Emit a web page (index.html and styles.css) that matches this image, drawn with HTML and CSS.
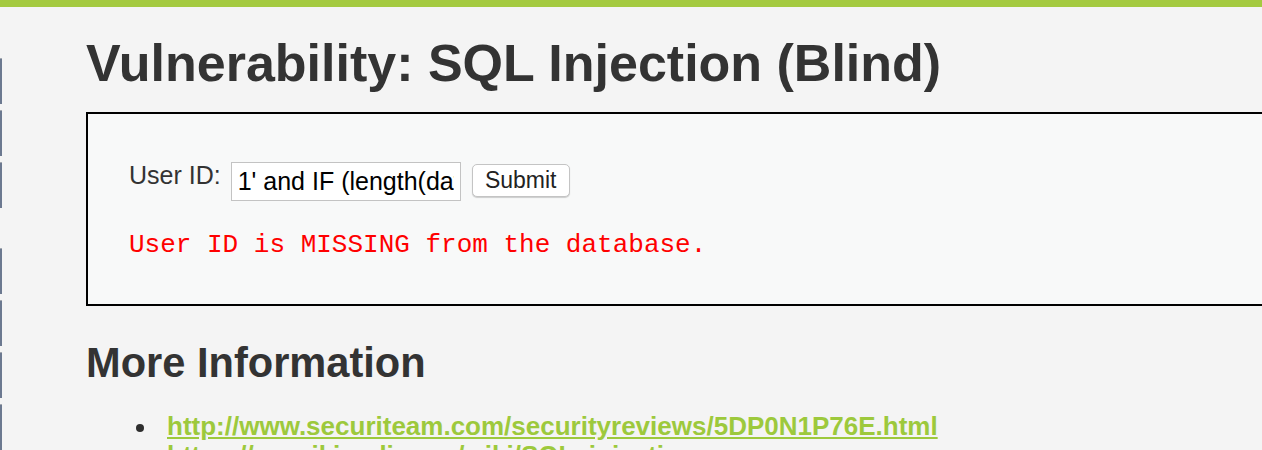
FILE: index.html
```html
<!DOCTYPE html>
<html>
<head>
<meta charset="utf-8">
<title>Vulnerability: SQL Injection (Blind)</title>
<link rel="stylesheet" href="styles.css">
</head>
<body>
<div class="topbar"></div>
<div class="page">
  <nav class="sidebar">
    <div class="group">
      <div class="item"></div>
      <div class="item"></div>
      <div class="item"></div>
    </div>
    <div class="group">
      <div class="item"></div>
      <div class="item"></div>
      <div class="item"></div>
      <div class="item"></div>
    </div>
  </nav>
  <main class="main">
    <h1 class="title">Vulnerability: SQL Injection (Blind)</h1>
    <div class="code-area">
      <form class="form-row">
        <label class="label" for="uid">User ID:</label>
        <input class="text-input" id="uid" type="text" value="1' and IF (length(database())=4,sleep(5),1) #">
        <button class="submit" type="button">Submit</button>
      </form>
      <pre class="error">User ID is MISSING from the database.</pre>
    </div>
    <h2 class="subtitle">More Information</h2>
    <ul class="links">
      <li><a href="#">http://www.securiteam.com/securityreviews/5DP0N1P76E.html</a></li>
      <li><a href="#">https://en.wikipedia.org/wiki/SQL_injection</a></li>
      <li><a href="#">http://www.unixwiz.net/techtips/sql-injection.html</a></li>
    </ul>
  </main>
</div>
</body>
</html>
```
FILE: styles.css
```css
html, body {
  margin: 0;
  padding: 0;
}
body {
  background: #f4f4f4;
  font-family: "Liberation Sans", Arial, sans-serif;
  color: #333;
  overflow: hidden;
  width: 1262px;
  height: 450px;
}
.topbar {
  height: 7px;
  background: #a4ca40;
}
.page {
  display: flex;
  align-items: flex-start;
}
.sidebar {
  width: 2px;
  flex: none;
  padding-top: 51px;
  display: flex;
  flex-direction: column;
  gap: 40px;
}
.group {
  display: flex;
  flex-direction: column;
  gap: 6px;
}
.item {
  height: 46px;
  background: #6c7990;
  border-top: 1px solid #a3a8b0;
  box-sizing: border-box;
}
.main {
  margin-left: 84px;
  width: 1300px;
  flex: none;
}
.title {
  margin: 26px 0 0;
  font-size: 52px;
  line-height: 60px;
  font-weight: bold;
  color: #333;
}
.code-area {
  margin-top: 19px;
  border: 2px solid #000;
  background: #f8f9f9;
  padding: 47px 0 44px 41px;
}
.form-row {
  display: flex;
  align-items: flex-start;
  margin: 0;
}
.label {
  font-size: 25px;
  line-height: 29px;
  color: #333;
  margin-right: 10px;
}
.text-input {
  margin: 1px 11px 0 0;
  width: 230px;
  height: 39px;
  box-sizing: border-box;
  border: 1px solid #c3c3c3;
  background: #fff;
  padding: 0 6px;
  font-family: "Liberation Sans", Arial, sans-serif;
  font-size: 25px;
  color: #000;
  outline: none;
}
.submit {
  margin-top: 3px;
  width: 98px;
  height: 33px;
  box-sizing: border-box;
  background: #fff;
  border: 1px solid #c4c4c4;
  border-radius: 5px;
  box-shadow: 0 1px 1px rgba(0, 0, 0, 0.18);
  font-family: "Liberation Sans", Arial, sans-serif;
  font-size: 23px;
  color: #222;
  padding: 0;
}
.error {
  margin: 29px 0 0;
  font-family: "Liberation Mono", "Courier New", monospace;
  font-size: 26px;
  line-height: 30px;
  color: #ff0000;
}
.subtitle {
  margin: 33px 0 0;
  font-size: 41.6px;
  line-height: 48px;
  font-weight: bold;
  color: #333;
}
.links {
  margin: 25px 0 0;
  padding-left: 81px;
  font-size: 26px;
  line-height: 29px;
  list-style: none;
}
.links li {
  color: #333;
}
.links li::before {
  content: "";
  display: inline-block;
  width: 8px;
  height: 8px;
  border-radius: 50%;
  background: #2e2e2e;
  margin-left: -31px;
  margin-right: 23px;
  vertical-align: middle;
}
.links a {
  color: #9dc93c;
  font-weight: bold;
  text-decoration: underline;
}
```
